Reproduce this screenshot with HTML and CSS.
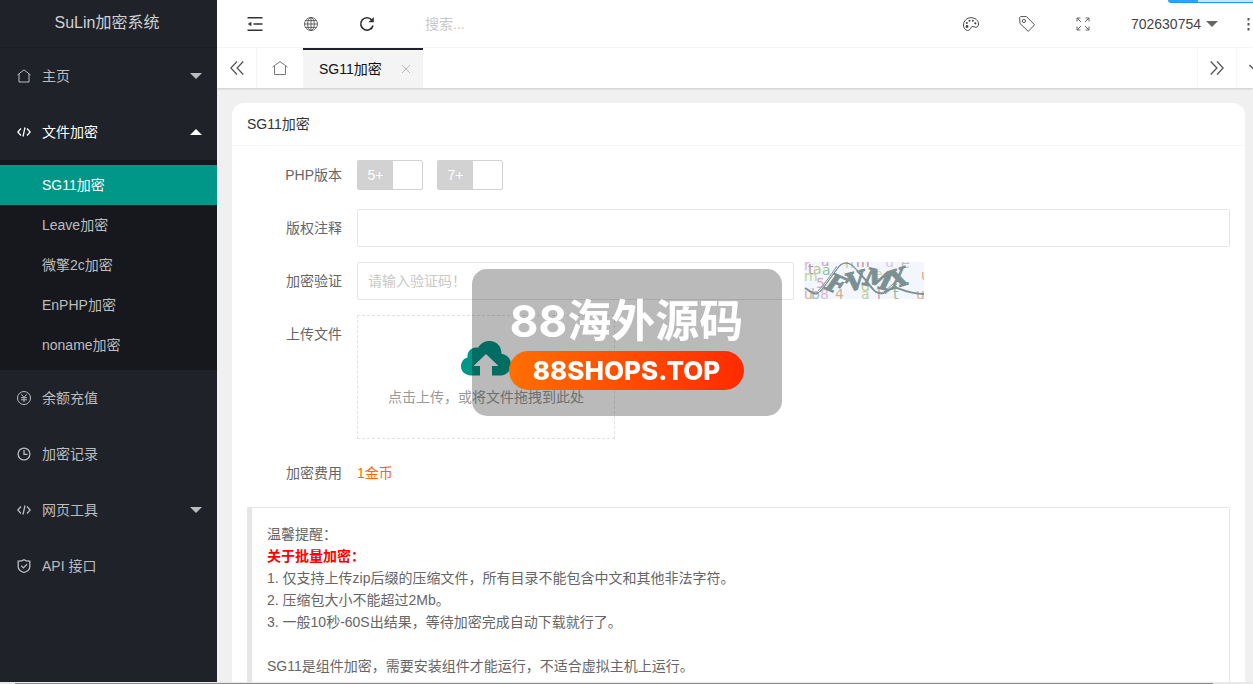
FILE: index.html
```html
<!DOCTYPE html>
<html lang="zh-CN">
<head>
<meta charset="utf-8">
<title>SuLin加密系统</title>
<link rel="stylesheet" href="styles.css">
</head>
<body>
<div class="app">
  <aside class="sidebar">
    <div class="brand">SuLin加密系统</div>
    <nav class="menu">
      <a class="menu-item" href="#">
        <svg class="icon" width="14" height="14" viewBox="0 0 14 14"><path d="M.5 6 7 .8 13.500 6M2 5v8h10V5"/></svg>
        <span>主页</span><i class="caret"></i>
      </a>
      <a class="menu-item menu-item-open" href="#">
        <svg class="icon icon-strong" width="14" height="14" viewBox="0 0 14 14"><path d="M4 3.500.8 7 4 10.500M10 3.500 13.200 7 10 10.500M8 2.500 6 11.500"/></svg>
        <span>文件加密</span><i class="caret caret-up"></i>
      </a>
      <div class="submenu">
        <a class="submenu-item submenu-item-active" href="#">SG11加密</a>
        <a class="submenu-item" href="#">Leave加密</a>
        <a class="submenu-item" href="#">微擎2c加密</a>
        <a class="submenu-item" href="#">EnPHP加密</a>
        <a class="submenu-item" href="#">noname加密</a>
      </div>
      <a class="menu-item" href="#">
        <svg class="icon" width="14" height="14" viewBox="0 0 14 14"><circle cx="7" cy="7" r="6.500"/><path d="M4.300 3.200 7 6.500 9.700 3.200M7 6.500V11M4 6.700h6M4 8.800h6"/></svg>
        <span>余额充值</span>
      </a>
      <a class="menu-item" href="#">
        <svg class="icon icon-strong" width="14" height="14" viewBox="0 0 14 14"><circle cx="7" cy="7" r="5.900"/><path d="M7 3v4.300h3.500"/></svg>
        <span>加密记录</span>
      </a>
      <a class="menu-item" href="#">
        <svg class="icon icon-strong" width="14" height="14" viewBox="0 0 14 14"><path d="M4 3.500.8 7 4 10.500M10 3.500 13.200 7 10 10.500M8 2.500 6 11.500"/></svg>
        <span>网页工具</span><i class="caret"></i>
      </a>
      <a class="menu-item" href="#">
        <svg class="icon icon-strong" width="14" height="14" viewBox="0 0 14 14"><path d="M7 .7C5.500 2 3.500 2.200 1.200 2.200v5.500C1.200 10.800 4 12.500 7 13.500c3-1 5.800-2.700 5.800-5.800V2.200C10.500 2.200 8.500 2 7 .7zM4.300 6.800 6.400 8.900 10 5.200"/></svg>
        <span>API 接口</span>
      </a>
    </nav>
  </aside>

  <div class="main">
    <header class="topbar">
      <button class="tool" type="button" aria-label="收起菜单">
        <svg width="16" height="16" viewBox="0 0 16 16" fill="none" stroke="#333" stroke-width="1.600"><path d="M.5 1.800h15M6.500 8h9M.5 14.200h15"/><path d="M.8 8 4.300 5.700v4.600z" fill="#333" stroke="none"/></svg>
      </button>
      <button class="tool" type="button" aria-label="前台">
        <svg width="14" height="14" viewBox="0 0 14 14" fill="none" stroke="#444" stroke-width=".8"><circle cx="7" cy="7" r="6.500"/><ellipse cx="7" cy="7" rx="3.300" ry="6.500"/><path d="M7 .5v13M.5 7h13M1.400 3.600h11.200M1.400 10.400h11.200"/></svg>
      </button>
      <button class="tool" type="button" aria-label="刷新">
        <svg width="16" height="16" viewBox="0 0 16 16" fill="none" stroke="#333" stroke-width="1.700"><path d="M14 9.500A6.200 6.200 0 1 1 12.800 4"/><path d="M14.800 1v5.300H9.500z" fill="#333" stroke="none"/></svg>
      </button>
      <input class="search" type="text" placeholder="搜索..." aria-label="搜索">
      <div class="topbar-right">
        <button class="tool" type="button" aria-label="主题">
          <svg width="16" height="14" viewBox="0 0 16 14" fill="none" stroke="#444"><path d="M3.500 13.200C1.500 12.300.5 10.300.5 8 .5 4 3.800.7 8 .7s7.500 2.800 7.500 6.300c0 2-1 3.300-2.500 3.300-1.300 0-2-.8-3.200-.8-1.500 0-1.600 1-2.300 2.200-.8 1.300-2.300 2.200-4 1.500z"/><g fill="#444" stroke="none"><circle cx="4" cy="9.500" r="1.400"/><circle cx="3.800" cy="6" r="1"/><circle cx="6.500" cy="3.700" r="1"/><circle cx="9.800" cy="3.700" r="1"/><circle cx="12.300" cy="6.300" r="1.100"/></g></svg>
        </button>
        <button class="tool" type="button" aria-label="便签">
          <svg width="16" height="16" viewBox="0 0 16 16" fill="none" stroke="#555"><path d="M.6 1.500 1.500.6 7.500.6 15.500 8.800 9.300 15.400 1 7.500z"/><circle cx="4.900" cy="5" r="1.600"/></svg>
        </button>
        <button class="tool" type="button" aria-label="全屏">
          <svg width="14" height="14" viewBox="0 0 14 14" fill="none" stroke="#666"><path d="M1 4.500V1h3.500M9.500 1H13v3.500M13 9.500V13H9.500M4.500 13H1V9.500M1 1l4 4M13 1 9 5M13 13 9 9M1 13l4-4"/></svg>
        </button>
        <button class="user" type="button">702630754<i class="caret"></i></button>
        <button class="more" type="button" aria-label="更多">
          <svg width="3" height="14" viewBox="0 0 3 14" fill="#555"><path d="M.5 1h2v2.500h-2zM.5 6h2v2.500h-2zM.5 11h2v2.500h-2z"/></svg>
        </button>
      </div>
    </header>

    <div class="tabs">
      <button class="tab-arrow" type="button" aria-label="向左">
        <svg width="14" height="14" viewBox="0 0 14 14" fill="none" stroke="#555" stroke-width="1.300"><path d="M7 .5.8 7 7 13.500M13.300.5 7.100 7l6.200 6.500"/></svg>
      </button>
      <button class="tab-home" type="button" aria-label="主页">
        <svg width="16" height="14" viewBox="0 0 16 14" fill="none" stroke="#777"><path d="M.5 6 8 .6 15.500 6M2.500 5v8.500h11V5"/></svg>
      </button>
      <div class="tab">
        <a href="#">SG11加密</a>
        <button class="tab-close" type="button" aria-label="关闭">
          <svg width="8" height="8" viewBox="0 0 8 8" fill="none" stroke="#bbb"><path d="M0 0l8 8M8 0 0 8"/></svg>
        </button>
      </div>
      <button class="tab-arrow tab-next" type="button" aria-label="向右">
        <svg width="14" height="14" viewBox="0 0 14 14" fill="none" stroke="#555" stroke-width="1.300"><path d="M.7.5 6.900 7 .7 13.500M7 .5 13.200 7 7 13.500"/></svg>
      </button>
      <button class="tab-more" type="button" aria-label="标签操作">
        <svg width="14" height="14" viewBox="0 0 14 14" fill="none" stroke="#555" stroke-width="1.300"><path d="M.5 4 7 10.500 13.500 4"/></svg>
      </button>
    </div>

    <main class="content">
      <section class="card">
        <h1 class="card-title">SG11加密</h1>
        <form class="form">
          <div class="row">
            <span class="row-label">PHP版本</span>
            <div class="switches">
              <label class="switch"><input type="checkbox"><span>5+</span></label>
              <label class="switch"><input type="checkbox"><span>7+</span></label>
            </div>
          </div>
          <div class="row">
            <label class="row-label" for="note">版权注释</label>
            <input class="field" id="note" type="text">
          </div>
          <div class="row">
            <label class="row-label" for="code">加密验证</label>
            <div class="verify">
              <input class="field" id="code" type="text" placeholder="请输入验证码！">
              <svg class="captcha" width="120" height="37" viewBox="0 0 120 37" role="img" aria-label="验证码">
                <rect width="120" height="37" fill="#f3f7fd"/>
                <g class="captcha-noise">
                  <text x="0" y="8" fill="#d9b5d8">r</text><text x="4" y="12" fill="#bd8fa2">t</text><text x="9" y="12" fill="#b2c98f">a</text><text x="18" y="13" fill="#8fc29d">a</text><text x="17" y="4" fill="#d39bc5">a</text>
                  <text x="0" y="19" fill="#c4d59c">m</text><text x="12" y="26" fill="#d3a9c6">5</text><text x="52" y="5" fill="#bd8f96">m</text><text x="41" y="6" fill="#b6cda0">n</text><text x="81" y="5" fill="#d9c4e5">u</text>
                  <text x="97" y="6" fill="#c3bcc6">e</text><text x="70" y="17" fill="#c9d7b1">e</text><text x="79" y="19" fill="#dcbdd5">u</text><text x="117" y="18" fill="#d9ac88">u</text><text x="0" y="37" fill="#d6b294">u</text>
                  <text x="7" y="37" fill="#a9b7cf">b</text><text x="16" y="37" fill="#d7b7d4">8</text><text x="31" y="37" fill="#d5b090">4</text><text x="57" y="29" fill="#b6d18e">d</text><text x="57" y="37" fill="#b9d099">a</text>
                  <text x="73" y="37" fill="#c59db3">l</text><text x="89" y="37" fill="#8fbf9d">t</text><text x="112" y="37" fill="#d8ae98">u</text>
                </g>
                <path d="M1 26c5 3 8 7 13 5M53 9c6 5 10 11 15 17 3 4 7 6 11 5 6-2 8-7 14-5 8 3 15 6 27 6" fill="none" stroke="#7d9091" stroke-width="2"/>
                <path d="M14 31C21 25 30 10 36 3c6-4 12-2 18 6M16 30C24 21 31 8 38 2c7-3 11 2 16 8M14 29C20 23 26 14 33 4M79 31l12-11M81 32l12-10" fill="none" stroke="#7d9091"/>
                <g class="captcha-code" text-anchor="middle">
                  <text x="32" y="31" transform="rotate(24 32 22)">F</text>
                  <text x="51" y="28" transform="rotate(-14 51 18)">V</text>
                  <text x="74" y="26" transform="rotate(14 74 17)">M</text>
                  <text x="94" y="25" transform="rotate(-18 94 16)">X</text>
                </g>
              </svg>
            </div>
          </div>
          <div class="row">
            <span class="row-label">上传文件</span>
            <button class="upload" type="button">
              <svg width="50" height="35" viewBox="0 0 50 35"><path fill="#009688" d="M10 34.500C4 34 0 30.500 0 25.500c0-4.500 2.500-8 6.500-9C6 10 11 5.500 17 6.700 19.500 2.500 23.500 0 28.500 0 35.500 0 40.500 5 40.500 12.800c5.500.7 9.500 5 9.500 10.700 0 6-4.500 11-10.500 11H31V25h6.500L25 13 12.500 25H19v9.500z"/></svg>
              <span>点击上传，或将文件拖拽到此处</span>
            </button>
          </div>
          <div class="row">
            <span class="row-label">加密费用</span>
            <span class="fee">1金币</span>
          </div>
        </form>
        <blockquote class="notice">
          温馨提醒：<br>
          <strong>关于批量加密：</strong><br>
          1. 仅支持上传zip后缀的压缩文件，所有目录不能包含中文和其他非法字符。<br>
          2. 压缩包大小不能超过2Mb。<br>
          3. 一般10秒-60S出结果，等待加密完成自动下载就行了。<br>
          <br>
          SG11是组件加密，需要安装组件才能运行，不适合虚拟主机上运行。<br>
          <br>
        </blockquote>
      </section>
    </main>
  </div>
  <div class="scroll-strip"><div class="scroll-thumb"></div></div>
</div>

<div class="progress"></div>
<div class="watermark">
  <div class="watermark-name">88海外源码</div>
  <div class="watermark-site">88SHOPS.TOP</div>
</div>
</body>
</html>
```

FILE: styles.css
```css
* { box-sizing: border-box; }

body {
  margin: 0;
  background: #f0f0f0;
  color: #666;
  font: 14px/22px "Liberation Sans", "Noto Sans CJK SC", sans-serif;
}

button, input { font: inherit; color: inherit; }
button { padding: 0; border: 0; background: none; cursor: pointer; }
a { color: inherit; text-decoration: none; }
svg { display: block; flex: none; }

.app {
  display: grid;
  grid-template: minmax(0, 1fr) 2px / 217px minmax(0, 1fr);
  height: 100vh;
  overflow: hidden;
}

/* Sidebar */
.sidebar { background: #20222a; color: #bcbdbf; overflow: hidden; }
.brand {
  height: 48px;
  padding-right: 3px;
  border-bottom: 1px solid #1b1d24;
  line-height: 46px;
  font-size: 16px;
  text-align: center;
  color: #d0d1d3;
}
.menu-item {
  display: flex;
  align-items: center;
  gap: 11px;
  height: 56px;
  padding: 0 15px 0 17px;
}
.menu-item-open { color: #fff; }
.icon { fill: none; stroke: currentColor; stroke-width: 1; }
.icon-strong { stroke-width: 1.3; }
.caret {
  margin-left: auto;
  border: 6px solid transparent;
  border-top-color: currentColor;
  border-bottom-width: 0;
}
.caret-up {
  border-width: 0 6px 6px;
  border-bottom-color: currentColor;
}
.submenu { padding: 5px 0; background: #17181e; }
.submenu-item { display: block; padding-left: 42px; line-height: 40px; }
.submenu-item-active { background: #009688; color: #fff; }

/* Top bar */
.main { display: flex; flex-direction: column; overflow: hidden; }
.topbar {
  display: flex;
  flex: none;
  height: 48px;
  padding-left: 10px;
  border-bottom: 1px solid #f6f6f6;
  background: #fff;
}
.tool { display: flex; align-items: center; justify-content: center; width: 56px; }
.search {
  flex: 1;
  min-width: 0;
  margin-left: 20px;
  padding: 0 10px;
  border: 0;
  outline: 0;
}
.search::placeholder, .field::placeholder { color: #c8c8c8; opacity: 1; }
.topbar-right { display: flex; }
.user {
  display: flex;
  align-items: center;
  gap: 5px;
  padding: 0 18px 0 20px;
  color: #444;
}
.user .caret { color: #666; }
.more {
  display: flex;
  align-items: center;
  justify-content: flex-end;
  width: 17px;
  padding-right: 3px;
}

/* Page tabs */
.tabs {
  display: flex;
  flex: none;
  height: 40px;
  background: #fff;
  box-shadow: 0 1px 2px rgba(0, 0, 0, .16);
}
.tab-arrow, .tab-home { display: flex; align-items: center; justify-content: center; }
.tab-arrow { width: 40px; border-right: 1px solid #f6f6f6; }
.tab-home { width: 46px; }
.tab {
  display: flex;
  align-items: center;
  gap: 20px;
  padding: 0 13px 0 16px;
  border-top: 2px solid #20222a;
  background: #f4f4f4;
  color: #111;
}
.tab-next { margin-left: auto; border-left: 1px solid #f6f6f6; }
.tab-more {
  display: flex;
  align-items: center;
  width: 16px;
  padding-left: 12px;
  overflow: hidden;
}

/* Card and form */
.content { flex: 1; padding: 15px 8px 0 15px; overflow: hidden; }
.card { border-radius: 12px; background: #fff; }
.card-title {
  margin: 0;
  padding: 0 15px;
  border-bottom: 1px solid #f6f6f6;
  font-size: 14px;
  font-weight: 400;
  line-height: 42px;
  color: #333;
}
.form {
  display: flex;
  flex-direction: column;
  gap: 15px;
  padding: 10px 15px 15px;
}
.row { display: grid; grid-template-columns: 95px minmax(0, 1fr); column-gap: 15px; min-height: 38px; }
.row-label { line-height: 38px; text-align: right; }
.switches { display: flex; align-items: center; gap: 14px; }
.switch {
  position: relative;
  width: 66px;
  height: 30px;
  border: 1px solid #d2d2d2;
  border-radius: 2px;
  color: #fff;
}
.switch input { position: absolute; inset: 0; margin: 0; opacity: 0; cursor: pointer; }
.switch span { display: block; width: 35px; background: #d2d2d2; line-height: 28px; text-align: center; }
.field {
  width: 100%;
  height: 38px;
  padding: 0 10px;
  border: 1px solid #e6e6e6;
  border-radius: 2px;
  outline: 0;
}
.verify { display: flex; gap: 10px; }
.verify .field { width: 50%; }
.captcha-noise { font: 14px "DejaVu Sans", sans-serif; }
.captcha-code {
  font: italic bold 25px "DejaVu Serif", serif;
  fill: #7d9091;
  stroke: #7d9091;
}
.upload {
  display: flex;
  flex-direction: column;
  align-items: center;
  justify-self: start;
  gap: 10px;
  padding: 25px 30px 30px;
  border: 1px dashed #e2e2e2;
  color: #999;
}
.fee { line-height: 38px; color: #ff6600; }
.notice {
  margin: 0 15px;
  padding: 15px;
  border: 1px solid #e6e6e6;
  border-left-width: 5px;
  border-radius: 0 2px 2px 0;
}
.notice strong { color: #f00; }

/* Horizontal scroll strip */
.scroll-strip { grid-column: 1 / -1; padding: 1px 40px 0 15px; background: #e8e8e8; }
.scroll-thumb { height: 1px; background: #8c8c8c; }

/* Overlays */
.progress {
  position: fixed;
  top: 0;
  right: 0;
  width: 85px;
  height: 3px;
  border-bottom: 1px solid #2196f3;
  border-bottom-left-radius: 3px;
  background: linear-gradient(90deg, #2ba3ff 30px, #c5e6ff 30px);
}
.watermark {
  position: fixed;
  inset: 0;
  display: flex;
  flex-direction: column;
  align-items: center;
  width: 310px;
  height: 147px;
  margin: auto;
  padding-top: 25px;
  border-radius: 15px;
  background: rgba(0, 0, 0, .27);
  color: #fff;
  pointer-events: none;
}
.watermark-name {
  padding-bottom: 3px;
  font: 700 44px/54px Inter, "Noto Sans CJK SC", sans-serif;
  white-space: nowrap;
}
.watermark-site {
  width: 235px;
  border-radius: 20px;
  background: linear-gradient(90deg, #ff6f00, #ff2b00);
  font: 800 26px/39px Inter, sans-serif;
  text-align: center;
}
```
